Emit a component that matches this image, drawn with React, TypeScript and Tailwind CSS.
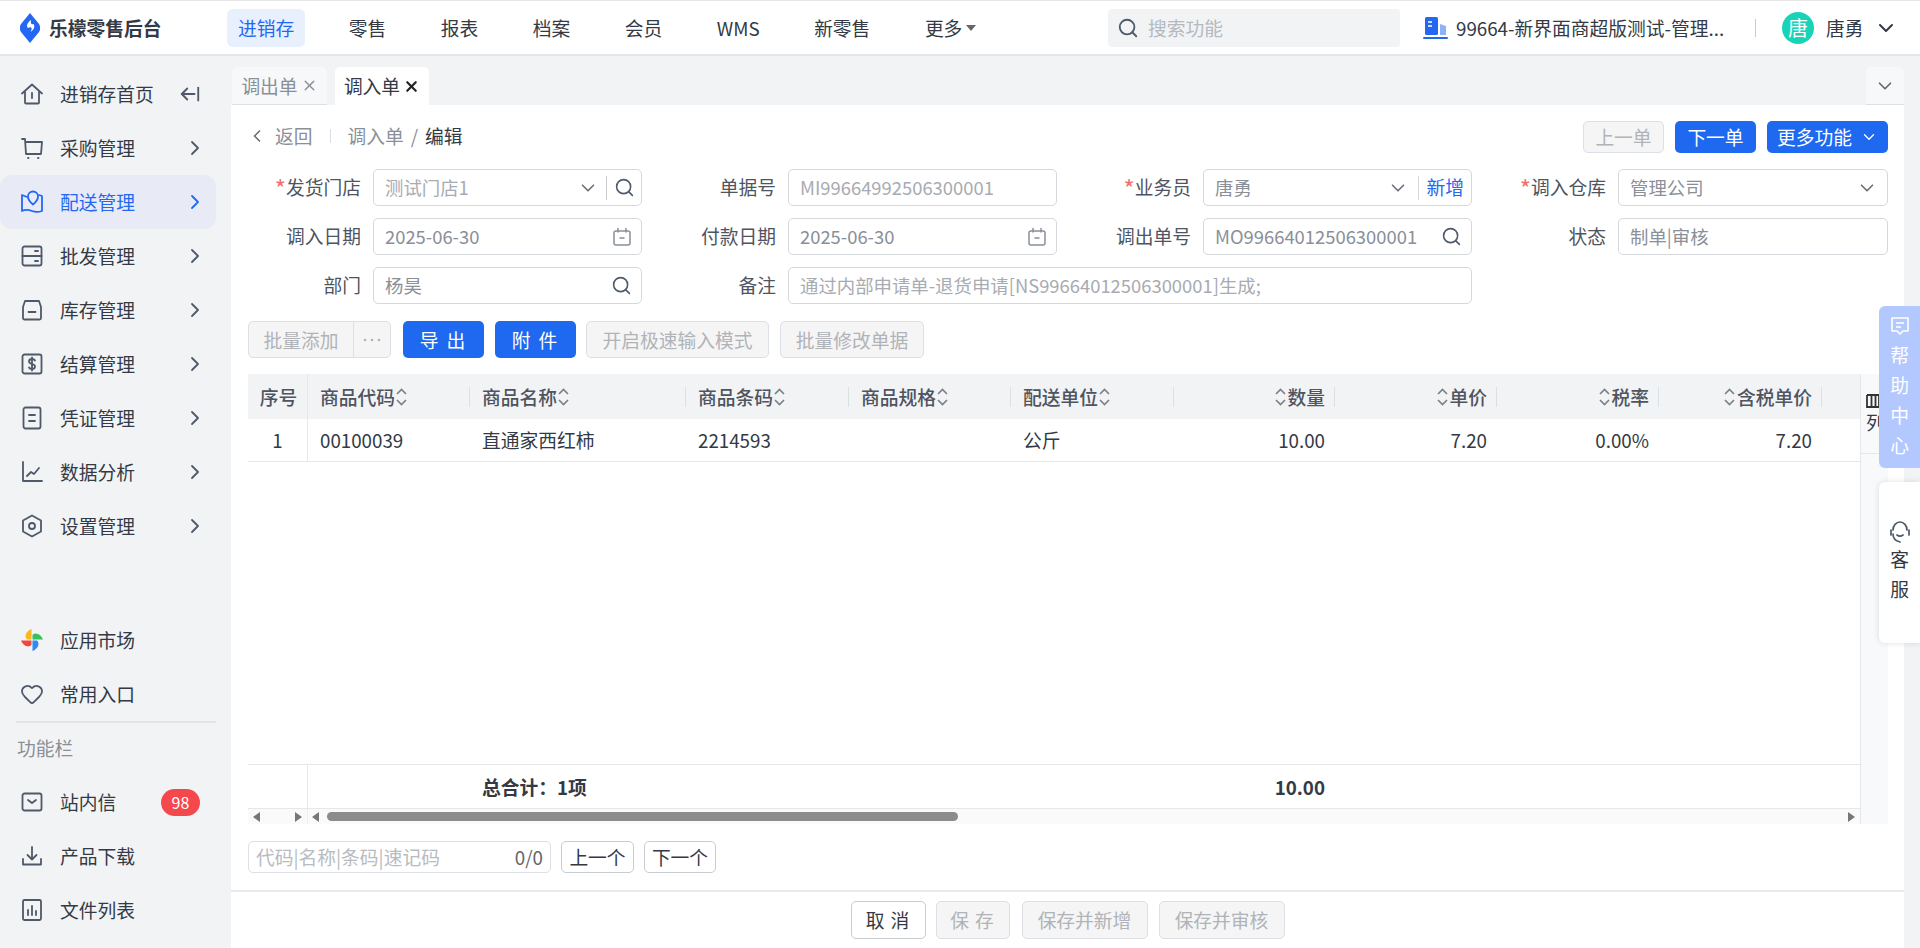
import React from 'react';
import { ArrowLeftFromLine, ChevronDown, ChevronLeft, ChevronRight, Heart, Search, X } from 'lucide-react';

const Ic = ({ children, className = 'w-6 h-6 text-[#4e5969]' }: { children: React.ReactNode; className?: string }) => (
  <svg viewBox="0 0 24 24" fill="none" stroke="currentColor" strokeWidth="1.8" strokeLinecap="round" strokeLinejoin="round" className={className}>
    {children}
  </svg>
);

const HomeIcon = () => <Ic><path d="M2 11.5 12 2.5l10 9M5 10v10.5a1 1 0 0 0 1 1h12a1 1 0 0 0 1-1V10M12 11v5" /></Ic>;
const CartIcon = () => <Ic><path d="M2 3h3l1 15h15l1-12H6" /><path d="M8 22h.5M18 22h.5" /></Ic>;
const MapIcon = ({ active }: { active?: boolean }) => (
  <Ic className={active ? 'w-6 h-6 text-[#2468f2]' : 'w-6 h-6 text-[#4e5969]'}>
    <path d="M7 7 2 5v16c3-1.500 6-1.500 10 0s7 1 10 0V6l-3-1" />
    <path d="M13 14.500s-5-4-5-8a5 5 0 0 1 10 0c0 4-5 8-5 8Z" />
  </Ic>
);
const ServerIcon = () => <Ic><rect x="2.500" y="2.500" width="19" height="19" rx="2" /><path d="M2.500 12h19M15 7h3M15 17h3" /></Ic>;
const StockIcon = () => <Ic><path d="M3 9 5 3h14l2 6v11a1.500 1.500 0 0 1-1.500 1.500h-15A1.500 1.500 0 0 1 3 20V9Z" /><path d="M8.500 14h7" /></Ic>;
const MoneyIcon = () => <Ic><rect x="2.500" y="2.500" width="19" height="19" rx="2" /><path d="M15 8.500c-.5-1-1.500-1.500-3-1.500-2 0-3 1-3 2.500s1.200 2 3 2.500 3 1 3 2.500-1 2.500-3 2.500c-1.500 0-2.500-.5-3-1.500M12 5.500v13" /></Ic>;
const VoucherIcon = () => <Ic><rect x="3.500" y="1.500" width="17" height="21" rx="2" /><path d="M9 9h6M9 15h6" /></Ic>;
const ChartIcon = () => <Ic><path d="M3 2v19h19" /><path d="m7 16 4-4 3 2 5-6" /></Ic>;
const HexIcon = () => <Ic><path d="M12 1.500 21 6.500v11l-9 5-9-5v-11l9-5Z" /><circle cx="12" cy="12" r="3" /></Ic>;
const MailIcon = () => <Ic><rect x="2.500" y="3.500" width="19" height="17" rx="2" /><path d="m8 10 4 3 4-3" /></Ic>;
const DownloadIcon = () => <Ic><path d="M12 3v12M7.500 11l4.500 4.500 4.500-4.500M3 15v5.500h18V15" /></Ic>;
const ReportIcon = () => <Ic><rect x="3" y="2" width="18" height="20" rx="1.500" /><path d="M8 12v5M12 8v9M16 13v4" /></Ic>;
const AppsIcon = () => (
  <svg viewBox="0 0 24 24" className="w-6 h-6">
    <path d="M11.500 11.500H7A5 5 0 0 1 6 6c1-2.500 3-4 5.500-5v10.500Z" fill="#fbb81b" />
    <path d="M12.500 11.500V7a5 5 0 0 1 5.500-1c2.500 1 4 3 5 5.500H12.500Z" fill="#36c25a" />
    <path d="M12.500 12.500H17a5 5 0 0 1 1 5.500c-1 2.500-3 4-5.500 5V12.500Z" fill="#2e8af6" />
    <path d="M11.500 12.500V17a5 5 0 0 1-5.500 1c-2.500-1-4-3-5-5.500h10.500Z" fill="#f0483e" />
  </svg>
);

const Logo = () => (
  <svg viewBox="0 0 20 30" className="w-[20px] h-[30px]">
    <path d="M10 0 19 11c1.500 2 1.500 6 0 8l-9 11-9-11c-1.500-2-1.500-6 0-8L10 0Z" fill="#2468f2" />
    <path d="M11 7C7 10 6 13 8 15c3-2 5 0 2.500 4 3-2 5-5 3-8-2 1-3 0-2.500-4Z" fill="#fff" />
  </svg>
);

const menu = [
  { name: '进销存首页', icon: <HomeIcon /> },
  { name: '采购管理', icon: <CartIcon />, arrow: true },
  { name: '配送管理', icon: <MapIcon active />, arrow: true, active: true },
  { name: '批发管理', icon: <ServerIcon />, arrow: true },
  { name: '库存管理', icon: <StockIcon />, arrow: true },
  { name: '结算管理', icon: <MoneyIcon />, arrow: true },
  { name: '凭证管理', icon: <VoucherIcon />, arrow: true },
  { name: '数据分析', icon: <ChartIcon />, arrow: true },
  { name: '设置管理', icon: <HexIcon />, arrow: true },
];

const MenuItem = ({ name, icon, arrow, active, children }: { name: string; icon: React.ReactNode; arrow?: boolean; active?: boolean; children?: React.ReactNode }) => (
  <div className={`flex items-center h-[54px] w-[216px] pl-5 pr-[9px] rounded-[12px] gap-4 ${active ? 'bg-[#e8ebf5] text-[#2468f2]' : 'text-[#333a45]'}`}>
    {icon}
    <span className="flex-1 whitespace-nowrap -mt-[1px]">{name}</span>
    {arrow && <ChevronRight className={active ? 'w-6 h-6 text-[#2468f2]' : 'w-6 h-6 text-[#4e5969]'} strokeWidth={1.8} />}
    {children}
  </div>
);

const Sidebar = () => (
  <aside className="w-[231px] shrink-0 pt-[11px]">
    {menu.map(m => (
      <MenuItem key={m.name} name={m.name} icon={m.icon} arrow={m.arrow} active={m.active}>
        {m.name === '进销存首页' && <ArrowLeftFromLine className="w-[22px] h-[22px] text-[#4e5969] mr-[6px]" strokeWidth={2} />}
      </MenuItem>
    ))}
    <div className="h-[60px]" />
    <MenuItem name="应用市场" icon={<AppsIcon />} />
    <MenuItem name="常用入口" icon={<Heart className="w-6 h-6 text-[#4e5969]" strokeWidth={1.8} />} />
    <div className="h-[54px] ml-4 w-[200px] border-t-2 border-[#e1e3e7] pt-[12px] text-[#8a8f98] pl-[1px]">功能栏</div>
    <MenuItem name="站内信" icon={<MailIcon />}>
      <span className="flex items-center justify-center w-[39px] h-[27px] rounded-full bg-[#f5484d] text-white text-[16px] mr-[7px]">98</span>
    </MenuItem>
    <MenuItem name="产品下载" icon={<DownloadIcon />} />
    <MenuItem name="文件列表" icon={<ReportIcon />} />
  </aside>
);

const navItems = ['零售', '报表', '档案', '会员', 'WMS', '新零售'];

const Header = () => (
  <header className="flex items-center h-[56px] shrink-0 bg-white border-b-2 border-[#e3e5e8] border-t border-t-[#e6e6e6]">
    <div className="flex items-center w-[227px] pl-[20px] gap-[9px]">
      <Logo />
      <span className="font-bold text-[#333a45] whitespace-nowrap">乐檬零售后台</span>
    </div>
    <nav className="flex items-center gap-[32.5px] w-[881px]">
      <span className="flex items-center h-[38px] px-[11px] rounded-[6px] bg-[#e8f0fe] text-[#2468f2]">进销存</span>
      {navItems.map(n => (
        <span key={n} className="px-[11px] text-[#333a45]">{n}</span>
      ))}
      <span className="flex items-center px-[11px] text-[#333a45]">
        更多
        <span className="ml-[4px] w-0 h-0 border-x-[5px] border-x-transparent border-t-[6px] border-t-[#666]" />
      </span>
    </nav>
    <div className="flex items-center w-[292px] h-[38px] rounded-[4px] bg-[#f2f3f5] pl-[9px] gap-[6px] text-[#b5b9c0]">
      <Search className="w-[22px] h-[22px] text-[#4e5969] mr-[3px]" strokeWidth={2} />
      搜索功能
    </div>
    <div className="flex items-center ml-[23px] text-[#333a45]">
      <svg viewBox="0 0 25 24" className="w-[25px] h-[24px]">
        <rect x="2" y="1" width="13" height="18" rx="1.500" fill="#2468f2" />
        <path d="M17 8l6 2v9h-6Z" fill="#8db2f8" />
        <rect x="0" y="21" width="25" height="2" rx="1" fill="#2468f2" />
        <path d="M5 6h4M5 10h4" stroke="#fff" strokeWidth="1.500" />
      </svg>
      <span className="ml-[8px] w-[270px] whitespace-nowrap overflow-hidden">99664-新界面商超版测试-管理...</span>
      <span className="ml-[29px] w-px h-[18px] bg-[#c8cbd0]" />
      <span className="ml-[26px] flex items-center justify-center w-[32px] h-[32px] rounded-full bg-[#17d4b9] text-white text-[20px]">唐</span>
      <span className="ml-[12px] whitespace-nowrap">唐勇</span>
      <ChevronDown className="ml-[10px] w-6 h-6 text-[#333a45]" strokeWidth={2} />
    </div>
  </header>
);

const Tabs = () => (
  <div className="flex items-end h-[49px] shrink-0">
    <div className="flex items-center justify-center gap-[3px] w-[95px] h-[38px] ml-px rounded-t-[5px] bg-[#f7f8fa] border-b border-[#dcdfe6] text-[#8a8f98] whitespace-nowrap">
      调出单 <X className="w-[17px] h-[17px]" />
    </div>
    <div className="flex items-center justify-center gap-[3px] w-[94px] h-[38px] ml-[8px] rounded-t-[5px] bg-white text-[#333a45] whitespace-nowrap">
      调入单 <X className="w-[17px] h-[17px] text-[#222]" strokeWidth={3} />
    </div>
    <div className="flex-1" />
    <div className="flex items-center justify-center w-[38px] h-[38px] rounded-t-[5px] bg-[#f7f8fa] border-b border-[#dcdfe6]">
      <ChevronDown className="w-[22px] h-[22px] text-[#666]" strokeWidth={1.8} />
    </div>
  </div>
);

const Field = ({ label, required, value, dark, children, className = '' }: { label: string; required?: boolean; value: string; dark?: boolean; children?: React.ReactNode; className?: string }) => (
  <div className={`flex items-center gap-[12px] ${className}`}>
    <label className="w-[114px] shrink-0 text-right text-[#4e5460] whitespace-nowrap -mt-[2px]">
      {required && <span className="text-[#f56c6c] text-[24px] leading-none align-[-3px]">*</span>}
      {label}
    </label>
    <div className="flex flex-1 items-center h-[37px] pl-[11px] pr-[9px] rounded-[5px] border border-[#d5d8dc] bg-white">
      <span className={`flex-1 text-[18.4px] whitespace-nowrap overflow-hidden -mt-[1px] ${dark ? 'text-[#8a8f98]' : 'text-[#a8abb2]'}`}>{value}</span>
      {children}
    </div>
  </div>
);

const CalIcon = () => (
  <svg viewBox="0 0 20 20" fill="none" stroke="#8a8f98" strokeWidth="1.500" className="w-[20px] h-[20px]">
    <rect x="2" y="4" width="16" height="14" rx="2" />
    <path d="M6 1.500V5M14 1.500V5M8 11h4" strokeLinecap="round" />
  </svg>
);

const SmallSearch = () => <Search className="w-[21px] h-[21px] text-[#4e5969]" strokeWidth={1.8} />;
const Drop = () => <ChevronDown className="w-[22px] h-[22px] text-[#6b7078]" strokeWidth={1.8} />;

const FormGrid = () => (
  <div className="grid grid-cols-[395px_395px_395px_396px] gap-x-[20px] gap-y-[12px] pl-4 mt-[16px]">
    <Field label="发货门店" required value="测试门店1">
      <Drop />
      <span className="w-px h-[24px] bg-[#c8cbd0] mx-[7px]" />
      <Search className="w-[21px] h-[21px] text-[#4e5969] -mr-[3px]" strokeWidth={1.8} />
    </Field>
    <Field label="单据号" value="MI99664992506300001" />
    <Field label="业务员" required value="唐勇" dark>
      <Drop />
      <span className="w-px h-[24px] bg-[#d5d8dc] ml-[9px] mr-[8px]" />
      <span className="text-[#2468f2] -mr-[2px] -mt-[1px] whitespace-nowrap">新增</span>
    </Field>
    <Field label="调入仓库" required value="管理公司" dark><Drop /></Field>
    <Field label="调入日期" value="2025-06-30" dark><CalIcon /></Field>
    <Field label="付款日期" value="2025-06-30" dark><CalIcon /></Field>
    <Field label="调出单号" value="MO99664012506300001" dark><SmallSearch /></Field>
    <Field label="状态" value="制单|审核" dark />
    <Field label="部门" value="杨昊" dark><SmallSearch /></Field>
    <Field label="备注" value="通过内部申请单-退货申请[NS99664012506300001]生成;" className="col-span-2" />
  </div>
);

const GhostBtn = ({ children, className = '' }: { children: React.ReactNode; className?: string }) => (
  <span className={`flex items-center justify-center rounded-[5px] border border-[#dcdfe6] bg-[#f5f5f5] text-[#b0b3b8] whitespace-nowrap ${className}`}>{children}</span>
);
const BlueBtn = ({ children, className = '' }: { children: React.ReactNode; className?: string }) => (
  <span className={`flex items-center justify-center rounded-[5px] bg-[#1f69f0] text-white whitespace-nowrap ${className}`}>{children}</span>
);

const Toolbar = () => (
  <div className="flex items-center h-[37px] mt-[17px] ml-[17px]">
    <div className="flex h-[37px] w-[143px] rounded-[5px] border border-[#dcdfe6] bg-[#f5f5f5] text-[#b0b3b8]">
      <span className="flex items-center justify-center w-[105px] border-r border-[#dcdfe6] whitespace-nowrap">批量添加</span>
      <span className="flex flex-1 items-center justify-center">
        <svg viewBox="0 0 20 4" className="w-[20px] h-[4px]" fill="#b0b3b8"><circle cx="3" cy="2" r="1.300" /><circle cx="10" cy="2" r="1.300" /><circle cx="17" cy="2" r="1.300" /></svg>
      </span>
    </div>
    <BlueBtn className="w-[81px] h-[37px] ml-[12px] tracking-[2px]">导 出</BlueBtn>
    <BlueBtn className="w-[81px] h-[37px] ml-[11px] tracking-[2px]">附 件</BlueBtn>
    <GhostBtn className="w-[183px] h-[37px] ml-[10px]">开启极速输入模式</GhostBtn>
    <GhostBtn className="w-[144px] h-[37px] ml-[11px]">批量修改单据</GhostBtn>
  </div>
);

const columns = [
  { title: '商品代码', w: 'w-[162px]', value: '00100039', total: '' },
  { title: '商品名称', w: 'w-[216px]', value: '直通家西红柿', total: '总合计：1项' },
  { title: '商品条码', w: 'w-[163px]', value: '2214593', total: '' },
  { title: '商品规格', w: 'w-[162px]', value: '', total: '' },
  { title: '配送单位', w: 'w-[163px]', value: '公斤', total: '' },
  { title: '数量', w: 'w-[161px]', value: '10.00', total: '10.00', right: true },
  { title: '单价', w: 'w-[162px]', value: '7.20', total: '', right: true },
  { title: '税率', w: 'w-[162px]', value: '0.00%', total: '', right: true },
  { title: '含税单价', w: 'w-[163px]', value: '7.20', total: '', right: true },
];

const SortIcon = () => (
  <svg viewBox="0 0 13 18" fill="none" stroke="#7d8187" strokeWidth="1.700" className="w-[13px] h-[18px] shrink-0">
    <path d="m2 6 4.500-4.500L11 6M2 12l4.500 4.500L11 12" />
  </svg>
);

const Arrow = ({ right }: { right?: boolean }) => (
  <span className={right ? 'block w-0 h-0 border-y-[5px] border-y-transparent border-l-[7px] border-l-[#777]' : 'block w-0 h-0 border-y-[5px] border-y-transparent border-r-[7px] border-r-[#777]'} />
);

const Table = () => (
  <div className="flex mt-4 ml-[17px] h-[450px]">
    <div className="flex flex-col w-[1612px]">
      <div className="flex h-[45px] bg-[#f2f3f5] text-[#4e5460] font-medium">
        <div className="flex items-center justify-center w-[60px] border-r border-[#e5e7eb] whitespace-nowrap pl-[2px]">序号</div>
        {columns.map(c => (
          <div key={c.title} className={`flex items-center ${c.w} ${c.right ? 'justify-end' : ''}`}>
            {c.right ? (
              <>
                <SortIcon />
                <span className="ml-[1px] mr-[9px] whitespace-nowrap">{c.title}</span>
              </>
            ) : (
              <>
                <span className="ml-[12px] whitespace-nowrap">{c.title}</span>
                <SortIcon />
                <span className="flex-1" />
              </>
            )}
            <span className="w-px h-[20px] bg-[#dcdfe3]" />
          </div>
        ))}
      </div>
      <div className="flex items-center h-[43px] border-b border-[#e5e7eb] text-[#333a45]">
        <div className="flex items-center justify-center w-[60px] h-full border-r border-[#e5e7eb]">1</div>
        {columns.map(c => (
          <div key={c.title} className={`${c.w} ${c.right ? 'text-right pr-[10px]' : 'pl-[12px]'}`}>{c.value}</div>
        ))}
      </div>
      <div className="flex-1" />
      <div className="flex items-center h-[45px] border-y border-[#e5e7eb] font-bold text-[#333a45]">
        <div className="w-[60px] h-full border-r border-[#e5e7eb]" />
        {columns.map(c => (
          <div key={c.title} className={`${c.w} ${c.right ? 'text-right pr-[10px]' : 'pl-[12px]'} whitespace-nowrap`}>{c.total}</div>
        ))}
      </div>
      <div className="flex items-center h-[15px] bg-[#fafafa]">
        <div className="flex items-center justify-between w-[60px] h-full px-[5px] border-r border-[#eee]">
          <Arrow />
          <Arrow right />
        </div>
        <span className="ml-[4px]"><Arrow /></span>
        <div className="ml-[8px] w-[631px] h-[9px] rounded-full bg-[#8c8c8c]" />
        <span className="flex-1" />
        <span className="mr-[5px]"><Arrow right /></span>
      </div>
    </div>
    <div className="w-[28px] bg-[#f8f9fb] border-l border-[#e5e7eb] overflow-hidden">
      <div className="h-[80px] border-b border-[#e5e7eb] pl-[5px] pt-[20px] text-[#333a45]">
        <svg viewBox="0 0 14 14" className="w-[14px] h-[14px]" fill="none" stroke="#333" strokeWidth="1.800"><path d="M1 1h12M1 1v12h12V1M5.500 1v12M9.500 1v12" /></svg>
        <div className="mt-[1px] whitespace-nowrap">列</div>
      </div>
    </div>
  </div>
);

const FindBar = () => (
  <div className="flex items-center h-[32px] mt-[17px] ml-[17px] gap-[10px]">
    <div className="flex items-center justify-between w-[303px] h-[32px] pl-[7px] pr-[7px] rounded-[5px] border border-[#dcdfe6] text-[#b8bbc1] whitespace-nowrap">
      代码|名称|条码|速记码
      <span className="text-[#666]">0/0</span>
    </div>
    <span className="flex items-center justify-center w-[73px] h-[32px] rounded-[5px] border border-[#c8cbd0] text-[#333a45] whitespace-nowrap">上一个</span>
    <span className="flex items-center justify-center w-[72px] h-[32px] rounded-[5px] border border-[#c8cbd0] text-[#333a45] whitespace-nowrap">下一个</span>
  </div>
);

const BottomBar = () => (
  <div className="flex items-center justify-center flex-1 mt-[17px] gap-[10px] border-t-2 border-[#e9eaec]">
    <span className="flex items-center justify-center w-[75px] h-[38px] rounded-[5px] border border-[#c8cbd0] text-[#333a45] tracking-[1px]">取 消</span>
    <GhostBtn className="w-[74px] h-[38px] tracking-[1px]">保 存</GhostBtn>
    <GhostBtn className="w-[126px] h-[38px] ml-[2px]">保存并新增</GhostBtn>
    <GhostBtn className="w-[126px] h-[38px] ml-px">保存并审核</GhostBtn>
  </div>
);

const Content = () => (
  <main className="flex flex-col flex-1 bg-white">
    <div className="flex items-center justify-between h-[32px] mt-4 pr-4">
      <div className="flex items-center text-[#8a8f98] -mt-[2px] whitespace-nowrap">
        <ChevronLeft className="ml-[16px] w-[20px] h-[20px] text-[#666]" strokeWidth={1.8} />
        <span className="ml-[8px]">返回</span>
        <span className="mx-[17px] w-px h-[14px] bg-[#dcdfe6]" />
        <span>调入单</span>
        <span className="mx-[7px]">/</span>
        <span className="text-[#333a45]">编辑</span>
      </div>
      <div className="flex items-center gap-[11px]">
        <GhostBtn className="w-[81px] h-[32px]">上一单</GhostBtn>
        <BlueBtn className="w-[81px] h-[32px]">下一单</BlueBtn>
        <BlueBtn className="w-[121px] h-[32px] gap-[8px]">更多功能 <ChevronDown className="w-[18px] h-[18px]" strokeWidth={1.8} /></BlueBtn>
      </div>
    </div>
    <FormGrid />
    <Toolbar />
    <Table />
    <FindBar />
    <BottomBar />
  </main>
);

const FloatPanels = () => (
  <>
    <div className="absolute left-[1879px] top-[306px] flex flex-col items-center w-[41px] h-[162px] pt-[10px] rounded-l-[6px] bg-[#b3c8ff] text-white leading-[30px]">
      <svg viewBox="0 0 20 20" fill="none" stroke="#fff" strokeWidth="1.600" className="w-[20px] h-[20px] mb-[4px]">
        <path d="M2 2h16v13h-5l-3 3-3-3H2V2ZM6 7h8M6 11h5" strokeLinejoin="round" />
      </svg>
      <span>帮</span><span>助</span><span>中</span><span>心</span>
    </div>
    <div className="absolute left-[1879px] top-[482px] flex flex-col items-center w-[41px] h-[161px] pt-[38px] rounded-l-[6px] bg-white shadow-[0_0_6px_rgba(0,0,0,0.12)] text-[#333a45] leading-[30px]">
      <svg viewBox="0 0 22 24" fill="none" stroke="#4e5969" strokeWidth="1.700" className="w-[22px] h-[24px]">
        <path d="M4 10a7 8 0 0 1 14 0M4 14c0 4 3 7 7 8M2 10v5M20 10v5M8 15c2 1.500 4 1.500 6 0" strokeLinecap="round" />
      </svg>
      <span>客</span><span>服</span>
    </div>
  </>
);

export default function App() {
  return (
    <div className="relative flex flex-col w-[1920px] h-[948px] overflow-hidden bg-[#f2f3f5] text-[18.75px] leading-[26px] font-['Noto_Sans_CJK_SC','Noto_Sans',sans-serif]">
      <Header />
      <div className="flex flex-1 min-h-0">
        <Sidebar />
        <div className="flex flex-col w-[1673px] shrink-0">
          <Tabs />
          <Content />
        </div>
      </div>
      <FloatPanels />
    </div>
  );
}
